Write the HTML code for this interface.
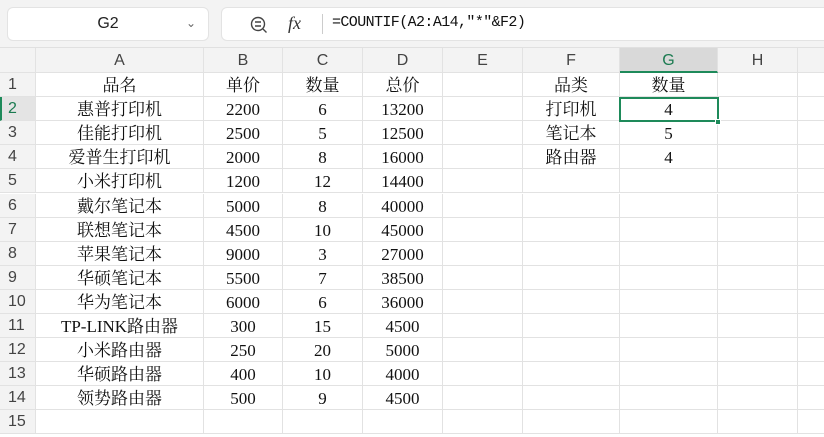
<!DOCTYPE html>
<html><head><meta charset="utf-8"><style>
*{margin:0;padding:0;box-sizing:border-box}
body{width:824px;height:437px;overflow:hidden;background:#fff;position:relative;font-family:"Liberation Sans",sans-serif}
.top{position:absolute;left:0;top:0;width:824px;height:48px;background:#f3f3f3;border-bottom:1px solid #e0e0e0}
.nb{position:absolute;left:7px;top:7px;width:202px;height:34px;background:#fff;border:1px solid #e3e3e3;border-radius:6px;font-size:16px;line-height:32px;text-align:center;color:#222}
.fb{position:absolute;left:221px;top:7px;width:610px;height:34px;background:#fff;border:1px solid #e3e3e3;border-radius:6px}
.grid{position:absolute;left:0;top:48px}
.c{position:absolute;text-align:center;font-family:"Liberation Serif","Noto Serif CJK SC",serif;font-size:17px;color:#111;white-space:nowrap;border-right:1px solid #e2e2e2;border-bottom:1px solid #e2e2e2;padding-top:2px}
.h{font-family:"Liberation Sans",sans-serif;color:#444;font-size:16px;background:#f3f3f3;padding-top:1px}
</style></head><body>
<div class="top">
<div class="nb">G2<span style="position:absolute;right:12px;top:-1px;font-size:12px;color:#666">&#8964;</span></div>
<div class="fb">
<svg style="position:absolute;left:28px;top:8px" width="18" height="18" viewBox="0 0 18 18"><circle cx="8" cy="8" r="6.5" fill="none" stroke="#444" stroke-width="1.4"/><path d="M13 13l3.5 3.5M5 6h6M5 10h6" stroke="#444" stroke-width="1.4"/></svg>
<span style="position:absolute;left:66px;top:5px;font-family:'Liberation Serif',serif;font-style:italic;font-size:18px;color:#333">fx</span>
<div style="position:absolute;left:100px;top:6px;width:1px;height:20px;background:#ccc"></div>
<span style="position:absolute;left:110px;top:6px;font-family:'Liberation Mono',monospace;font-size:15px;color:#111;letter-spacing:-0.6px">=COUNTIF(A2:A14,″*″&amp;F2)</span>
</div>
</div>
<div class="grid" id="g"></div>
<script>
var xs=[0,36,204,283,363,443,523,620,718,798,900];
var L=['','A','B','C','D','E','F','G','H',''];
var data=[["品名","单价","数量","总价","","品类","数量"],
["惠普打印机","2200","6","13200","","打印机","4"],
["佳能打印机","2500","5","12500","","笔记本","5"],
["爱普生打印机","2000","8","16000","","路由器","4"],
["小米打印机","1200","12","14400"],["戴尔笔记本","5000","8","40000"],["联想笔记本","4500","10","45000"],
["苹果笔记本","9000","3","27000"],["华硕笔记本","5500","7","38500"],["华为笔记本","6000","6","36000"],
["TP-LINK路由器","300","15","4500"],["小米路由器","250","20","5000"],["华硕路由器","400","10","4000"],["领势路由器","500","9","4500"],[]];
var h='';var rh=24.1;
for(var r=0;r<16;r++){var y=r==0?0:25+(r-1)*rh;var hh=r==0?25:rh;
for(var c=0;c<10;c++){var x=xs[c],w=xs[c+1]-x;var t='',cls='c',st='';
if(r==0){cls+=' h';t=L[c];if(c==7)st='background:#d9d9d9;color:#1a7a50;border-bottom:2px solid #1e8a5a;';}
else if(c==0){cls+=' h';t=r;st='text-align:left;padding-left:8px;';if(r==2)st+='color:#1a7a50;background:#e4e4e4;border-left:2px solid #1e8a5a;padding-left:6px;';}
else{var d=data[r-1]||[];t=d[c-1]||'';}
h+='<div class="'+cls+'" style="left:'+x+'px;top:'+y+'px;width:'+w+'px;height:'+hh+'px;line-height:'+(hh-2)+'px;'+st+'">'+t+'</div>';}}
h+='<div style="position:absolute;left:619px;top:49.1px;width:100px;height:25.1px;border:2px solid #1e8a5a"></div><div style="position:absolute;left:715px;top:71px;width:6px;height:6px;background:#1e8a5a;border:1px solid #fff"></div>';
document.getElementById('g').innerHTML=h;
</script>
</body></html>
